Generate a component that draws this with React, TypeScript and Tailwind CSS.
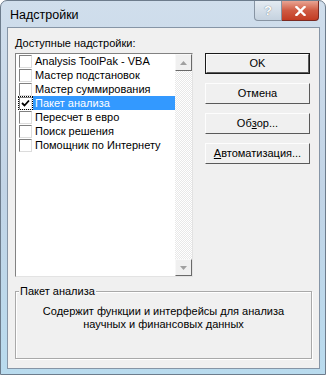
import { Fragment } from 'react';

const ADDINS = [
  { label: 'Analysis ToolPak - VBA', checked: false },
  { label: 'Мастер подстановок', checked: false },
  { label: 'Мастер суммирования', checked: false },
  { label: 'Пакет анализа', checked: true, selected: true },
  { label: 'Пересчет в евро', checked: false },
  { label: 'Поиск решения', checked: false },
  { label: 'Помощник по Интернету', checked: false },
];

const font = "font-['Liberation_Sans',Arial,sans-serif]";

function Check() {
  return (
    <svg width="9" height="9" viewBox="0 0 9 9" className="block">
      <path d="M1 4 L3.5 6.5 L8 1.5" fill="none" stroke="#000" strokeWidth="1.8" />
    </svg>
  );
}

function Checkbox({ checked }: { checked: boolean }) {
  return (
    <div className="flex h-[13px] w-[13px] shrink-0 items-center justify-center border border-t-[#808080] border-l-[#808080] border-b-[#dcdcdc] border-r-[#dcdcdc] bg-white">
      {checked && <Check />}
    </div>
  );
}

function Arrow({ up }: { up?: boolean }) {
  return (
    <svg width="7" height="4" viewBox="0 0 7 4" className="block">
      <path d={up ? 'M0 4 L3.5 0 L7 4 Z' : 'M0 0 L3.5 4 L7 0 Z'} fill="#a0a0a0" />
    </svg>
  );
}

function ScrollButton({ up }: { up?: boolean }) {
  return (
    <div className="flex h-[17px] w-[17px] items-center justify-center border border-t-[#f8f8f8] border-l-[#f8f8f8] border-b-[#696969] border-r-[#696969] bg-[#f0f0f0]">
      <Arrow up={up} />
    </div>
  );
}

function Button({ children, isDefault }: { children: React.ReactNode; isDefault?: boolean }) {
  return (
    <div className={`h-[21px] w-[105px] ${isDefault ? 'border border-[#1a1a1a]' : ''}`}>
      <div className="flex h-full w-full items-center justify-center border border-t-[#fdfdfd] border-l-[#fdfdfd] border-b-[#5a5a5a] border-r-[#5a5a5a] bg-[#f0f0f0] text-[11px] text-black">
        {children}
      </div>
    </div>
  );
}

export default function App() {
  return (
    <div className={`${font} relative h-[375px] w-[326px] overflow-hidden rounded-t-[7px] border border-[#6d7c8c] bg-gradient-to-b from-[#d0deec] via-[#c2d4e6] to-[#b9dbee]`}>
      {/* title bar */}
      <div className="flex h-[26px] items-center pl-[9px] pt-[2px] text-[12.5px] text-black">Надстройки</div>
      <div className="absolute right-[6px] top-0 flex">
        <div className="flex h-[20px] w-[28px] items-center justify-center rounded-bl-[4px] border border-t-0 border-[#8794a3] bg-gradient-to-b from-[#e4ebf2] to-[#c5d2df] text-[13px] font-bold text-[#ffffff] [text-shadow:0_0_1px_#4b5866]">
          ?
        </div>
        <div className="flex h-[20px] w-[37px] items-center justify-center rounded-br-[4px] border border-l-0 border-t-0 border-[#7a2a22] bg-gradient-to-b from-[#e8a493] via-[#cf5a42] to-[#c23b22]">
          <svg width="11" height="10" viewBox="0 0 11 10">
            <path d="M1.5 1 L9.5 9 M9.5 1 L1.5 9" stroke="#fff" strokeWidth="2.4" strokeLinecap="square" />
          </svg>
        </div>
      </div>

      {/* client area */}
      <div className="ml-[6px] mr-[5px] h-[342px] border border-[#8695a6] bg-[#f0f0f0] px-[7px]">
        <div className="pt-[8px] text-[11px] leading-[14px] text-black">
          <span className="underline decoration-1 underline-offset-[1px]">Д</span>оступные надстройки:
        </div>

        <div className="mt-[3px] flex">
          {/* list box */}
          <div className="flex h-[224px] w-[178px] border border-t-[#828282] border-l-[#828282] border-b-[#e3e3e3] border-r-[#e3e3e3] bg-white">
            <div className="flex-1">
              {ADDINS.map((a) => (
                <div key={a.label} className="flex h-[14px] items-center">
                  <div className={`ml-[2px] flex h-[14px] w-[15px] items-center justify-center ${a.selected ? 'outline-1 outline-dotted outline-offset-[-1px] outline-black' : ''}`}>
                    <Checkbox checked={a.checked} />
                  </div>
                  <div
                    className={`flex h-[14px] items-center pl-[2px] text-[11px] ${
                      a.selected ? 'flex-1 bg-[#3399ff] text-white' : 'text-black'
                    }`}
                  >
                    {a.label}
                  </div>
                </div>
              ))}
            </div>
            <div className="flex w-[17px] flex-col bg-[repeating-conic-gradient(#ffffff_0%_25%,#e8e8e8_0%_50%)] bg-[length:2px_2px]">
              <ScrollButton up />
              <div className="flex-1" />
              <ScrollButton />
            </div>
          </div>

          {/* buttons */}
          <div className="ml-[12px] flex flex-col gap-[9px]">
            <Button isDefault>OK</Button>
            <Button>Отмена</Button>
            <Button>
              <Fragment>
                Об<span className="underline">з</span>ор...
              </Fragment>
            </Button>
            <Button>
              <Fragment>
                <span className="underline">А</span>втоматизация...
              </Fragment>
            </Button>
          </div>
        </div>

        {/* group box */}
        <div className="relative mt-[14px] h-[68px] w-[297px] border border-[#a9a9a9] shadow-[inset_1px_1px_0_#ffffff,1px_1px_0_#ffffff]">
          <div className="absolute -top-[8px] left-[3px] bg-[#f0f0f0] px-[1px] text-[11px] leading-[14px] text-black">
            Пакет анализа
          </div>
          <div className="pt-[13px] text-center text-[11px] leading-[13px] text-black">
            Содержит функции и интерфейсы для анализа
            <br />
            научных и финансовых данных
          </div>
        </div>
      </div>
    </div>
  );
}
